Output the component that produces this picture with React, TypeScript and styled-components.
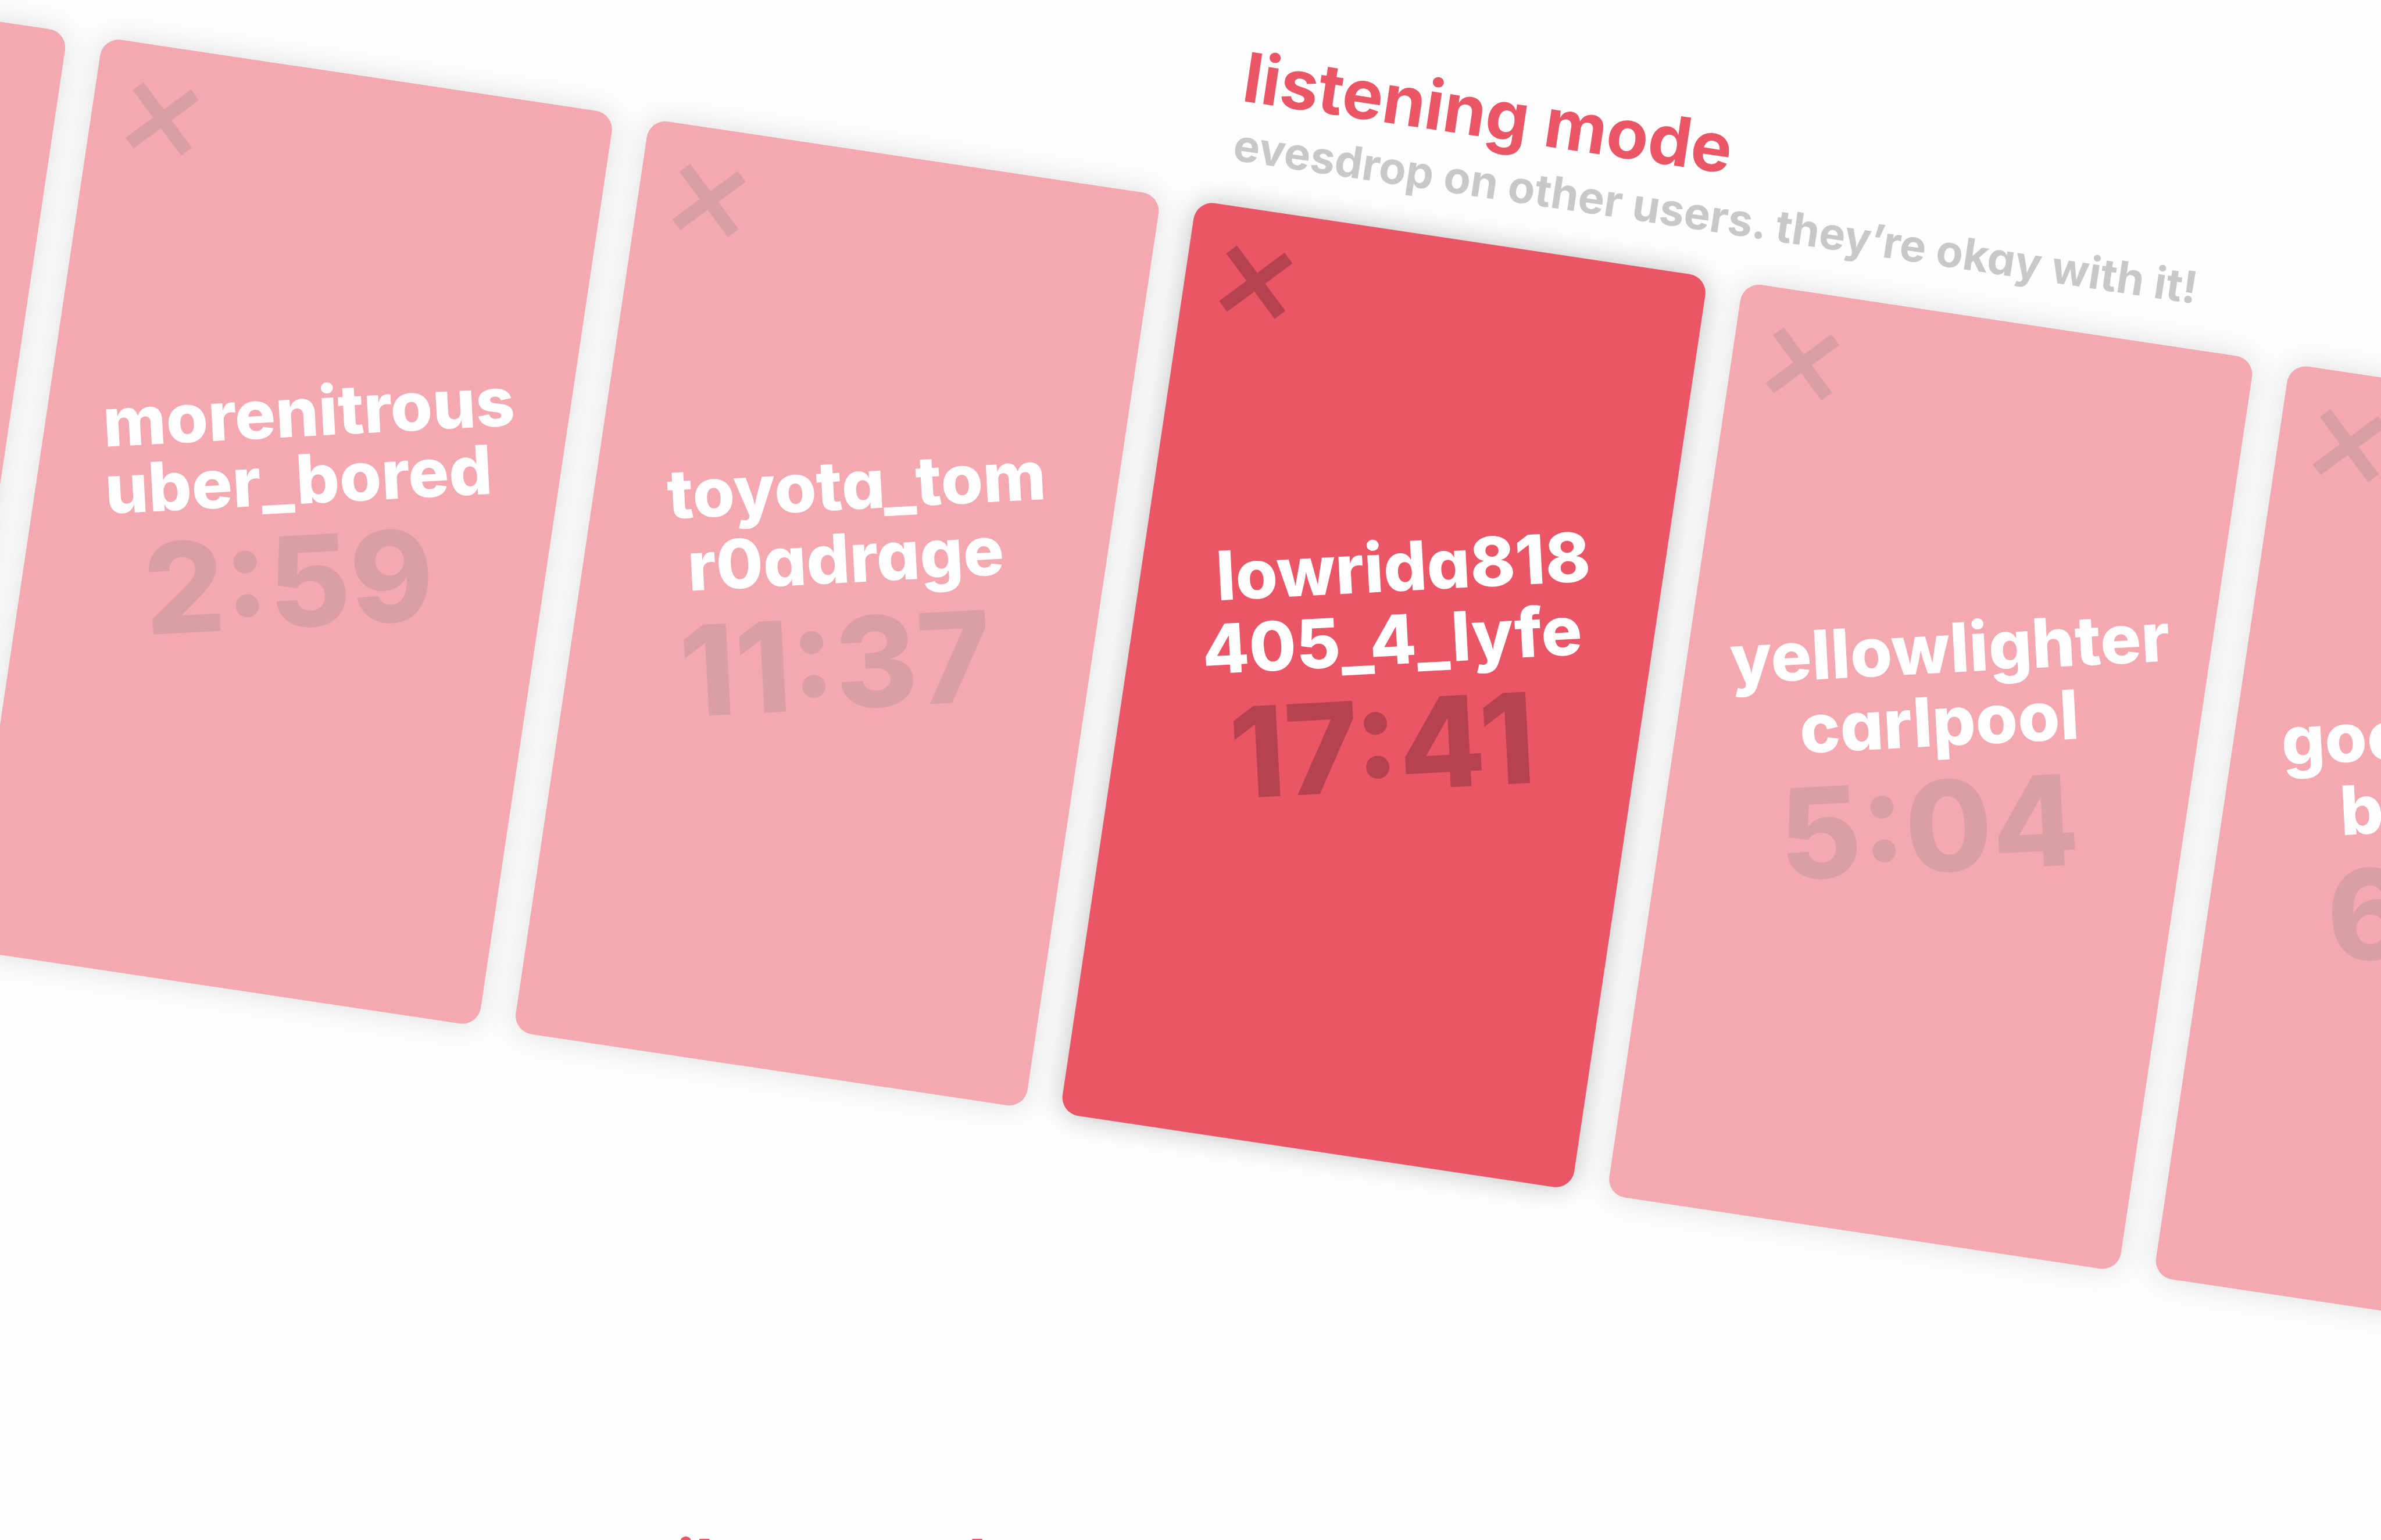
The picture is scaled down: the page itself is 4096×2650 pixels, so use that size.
import React from "react";
import styled, { createGlobalStyle } from "styled-components";

const CARD_WIDTH = 890;
const CARD_GAP = 61;
const ACTIVE_INDEX = 3;
const LEAD = ACTIVE_INDEX * (CARD_WIDTH + CARD_GAP);

const GlobalStyle = createGlobalStyle`
  *, *::before, *::after { box-sizing: border-box; }
  body {
    margin: 0;
    background: #fefefe;
    font-family: Inter, "Open Sans", "Liberation Sans", sans-serif;
    font-feature-settings: "cv11" 1;
  }
`;

const Page = styled.main`
  height: 100vh;
  padding-top: 57px;
  overflow: hidden;
`;

/* The whole carousel tilts around the top left corner of the active card. */
const Carousel = styled.section`
  width: max-content;
  margin-left: calc(50% - ${LEAD - 10}px);
  transform: rotate(8.5deg);
  transform-origin: ${LEAD}px 288px;
`;

const Heading = styled.header`
  display: flex;
  flex-direction: column;
  gap: 12px;
  padding: 0 0 64px ${LEAD + 50}px;
`;

const Title = styled.h2`
  margin: 0;
  color: #eb5667;
  font-size: 118px;
  font-weight: 700;
  line-height: 128px;
  white-space: nowrap;
`;

const Subtitle = styled.p`
  margin: 0;
  color: #c8c8c8;
  font-size: 76px;
  font-weight: 700;
  line-height: 84px;
  white-space: nowrap;
`;

const Row = styled.ul`
  display: flex;
  gap: ${CARD_GAP}px;
  margin: 0;
  padding: 0;
  list-style: none;
`;

const Card = styled.li<{ $active?: boolean }>`
  flex: none;
  width: ${CARD_WIDTH}px;
  height: 1588px;
  padding-top: 66px;
  border-radius: 32px;
  background: #eb5667;
  box-shadow: 0 0 48px rgba(0, 0, 0, 0.25);
  opacity: ${(p) => (p.$active ? 1 : 0.5)};
`;

const CloseButton = styled.button`
  display: block;
  width: 116px;
  height: 116px;
  margin: 0 0 324px 64px;
  padding: 0;
  border: 0;
  background: none;
  color: #b7424f;
  cursor: pointer;

  svg { display: block; }
`;

const Names = styled.div<{ $tight?: boolean }>`
  display: flex;
  flex-direction: column;
  align-items: center;
  justify-content: flex-end;
  height: 256px;
  color: #fff;
  font-size: 117px;
  font-weight: 800;
  line-height: ${(p) => (p.$tight ? 118 : 128)}px;
`;

const Name = styled.span`
  transform: rotate(-11.5deg);
  white-space: nowrap;
`;

const Timer = styled.div`
  display: flex;
  justify-content: center;
  padding-left: 20px;
  color: #b7424f;
  font-size: 216px;
  font-weight: 800;
  line-height: 236px;
`;

const Time = styled.time`
  transform: rotate(-11.5deg);
`;

const NextMode = styled.section`
  padding: 694px 0 0 26.8%;
`;

type Call = { users: string[]; time: string; tight?: boolean };

const calls: (Call | null)[] = [
  null,
  { users: ["morenitrous", "uber_bored"], time: "2:59", tight: true },
  { users: ["toyota_tom", "r0adrage"], time: "11:37" },
  { users: ["lowrida818", "405_4_lyfe"], time: "17:41" },
  { users: ["yellowlighter", "carlpool"], time: "5:04" },
  { users: ["goodvibes_8", "bigrig44"], time: "6:48" },
];

const CrossIcon = () => (
  <svg width="116" height="116" viewBox="0 0 116 116" aria-hidden="true">
    <path d="M8.5 8.5 107.5 107.5M107.5 8.5 8.5 107.5" stroke="currentColor" strokeWidth="23" fill="none" />
  </svg>
);

export default function App() {
  return (
    <>
      <GlobalStyle />
      <Page>
        <Carousel>
          <Heading>
            <Title>listening mode</Title>
            <Subtitle>evesdrop on other users. they’re okay with it!</Subtitle>
          </Heading>
          <Row>
            {calls.map((call, i) => (
              <Card key={i} $active={i === ACTIVE_INDEX}>
                {call && (
                  <>
                    <CloseButton type="button" aria-label="close">
                      <CrossIcon />
                    </CloseButton>
                    <Names $tight={call.tight}>
                      {call.users.map((user) => (
                        <Name key={user}>{user}</Name>
                      ))}
                    </Names>
                    <Timer>
                      <Time>{call.time}</Time>
                    </Timer>
                  </>
                )}
              </Card>
            ))}
          </Row>
        </Carousel>
        <NextMode>
          <Title>silent mode</Title>
        </NextMode>
      </Page>
    </>
  );
}
